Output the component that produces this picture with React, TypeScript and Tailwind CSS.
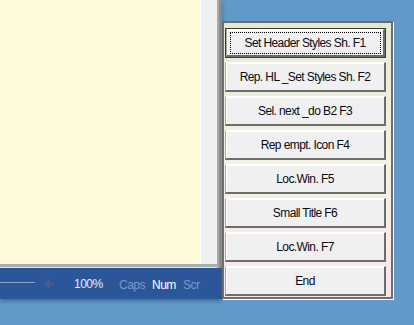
import React from "react";

const buttons = [
  "Set Header Styles Sh. F1",
  "Rep. HL _Set Styles Sh. F2",
  "Sel. next _do B2 F3",
  "Rep empt. Icon F4",
  "Loc.Win. F5",
  "Small Title F6",
  "Loc.Win. F7",
  "End",
];

function ToolButton({ label, focused }: { label: string; focused?: boolean }) {
  return (
    <button
      className={`relative h-[30px] w-[161px] shrink-0 bg-[#f0f0f0] text-[12px] tracking-[-0.6px] text-[#0a0a14] ${
        focused ? "border border-[#3c3c3c]" : ""
      }`}
    >
      <div className="flex h-full w-full items-center justify-center border-t border-l border-b-2 border-r-2 border-t-white border-l-[#a9a9a9] border-b-[#6c6c6c] border-r-[#6c6c6c] shadow-[inset_1px_1px_0_#ffffff]">
        {label}
      </div>
      {focused && (
        <div className="pointer-events-none absolute left-[4px] right-[4px] top-[3px] bottom-[3px] border border-dotted border-black" />
      )}
    </button>
  );
}

export default function App() {
  return (
    <div
      className="relative h-[325px] w-[414px] overflow-hidden bg-[#6399c8]"
      style={{ fontFamily: '"Liberation Sans", Arial, sans-serif' }}
    >
      {/* editor window */}
      <div className="absolute left-0 top-0 flex h-[299px] w-[222px] flex-col shadow-[0_2px_4px_rgba(20,50,90,0.45)]">
        <div className="flex h-[268px] shrink-0">
          <div className="flex w-[217px] flex-col">
            <div className="flex flex-1">
              <div className="w-[200px] bg-[#fffad8]" />
              <div className="w-px bg-white" />
              <div className="flex-1 bg-[#f0f0f0]" />
            </div>
            <div className="h-[3px] bg-[#acacac]" />
            <div className="h-px bg-[#e6e6e6]" />
          </div>
          <div className="w-[2px] bg-[#aaaaaa]" />
          <div className="w-[2px] bg-[#8a8a8a]" />
          <div className="w-px bg-[#6f8fb4]" />
        </div>
        <div className="flex h-[31px] items-center bg-[#2b579a] text-[12px] tracking-[-0.5px]">
          <div className="mt-[-3px] h-px w-[35px] bg-[#91a5c8]" />
          <svg className="ml-[9px]" width="9" height="9" viewBox="0 0 9 9">
            <path d="M0 4.5H9M4.5 0V9" stroke="#4a5f86" strokeWidth="2" />
          </svg>
          <span className="ml-[21px] w-[45px] text-[#e3ecfa]">100%</span>
          <span className="mt-[2px] w-[33px] text-[#7f98c4]">Caps</span>
          <span className="mt-[2px] w-[31px] text-white">Num</span>
          <span className="mt-[2px] text-[#7f98c4]">Scr</span>
        </div>
      </div>

      {/* tool panel */}
      <div className="absolute left-[222px] top-[21px] h-[278px] w-[171px] border-2 border-[#6d6d6d] bg-gradient-to-b from-[#e3ead4] via-[#f4f2e4] to-[#f8e5eb] shadow-[1px_1px_0_#ffffff]">
        <div className="flex flex-col gap-[4px] pl-px pt-[5px]">
          {buttons.map((b, i) => (
            <ToolButton key={i} label={b} focused={i === 0} />
          ))}
        </div>
      </div>
    </div>
  );
}
